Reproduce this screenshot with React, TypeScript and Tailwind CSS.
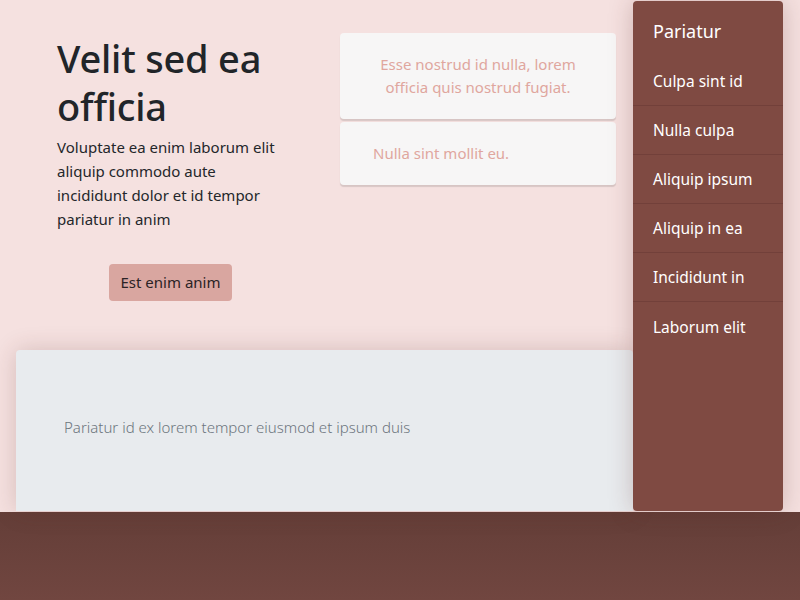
import React from "react";

const menuItems = ["Culpa sint id", "Nulla culpa", "Aliquip ipsum", "Aliquip in ea", "Incididunt in", "Laborum elit"];

const Sidebar = () => {
    return (
        <aside className="mt-px mr-[17px] w-[150px] h-[510px] shrink-0 rounded bg-[#7f4a42] text-white shadow-[0_0_24px_rgba(90,40,35,0.25)]">
            <div className="px-5 pt-[17px] pb-[13px] text-[18px] leading-[26px]">Pariatur</div>
            <ul>
                {menuItems.map((item, i) => (
                    <li key={item}
                        className={
                            "px-5 h-[49px] flex items-center pt-[2px] text-[15.5px] " +
                            (i < menuItems.length - 1 ? "border-b border-[#72403a]" : "")
                        }
                    >
                        {item}
                    </li>
                ))}
            </ul>
        </aside>
    );
};

export default function App() {
    return (
        <div className="w-[800px] h-[600px] overflow-hidden bg-[#f5e1e0] font-['Noto_Sans',sans-serif] text-[#212529]">
            <div className="flex h-[512px]">
                <div className="flex-1 flex flex-col">
                    <div className="flex h-[350px]">
                        <div className="ml-[57px] w-[227px] pt-[34px]">
                            <h1 className="text-[38px] leading-[48px] font-medium tracking-[-0.2px]">Velit sed ea officia</h1>
                            <p className="mt-[5px] text-[15px] leading-[24px] text-[#24272b]">
                                Voluptate ea enim laborum elit aliquip commodo aute incididunt dolor et id tempor pariatur in anim
                            </p>
                            <div className="mt-[33px] flex justify-center">
                                <button className="h-[37px] px-3 rounded bg-[#d9a6a0] text-[15px] text-[#2b2325]">
                                    Est enim anim
                                </button>
                            </div>
                        </div>
                        <div className="ml-[56px] mt-[33px] w-[276px] flex flex-col gap-[3px]">
                            <div className="h-[86px] rounded bg-[#f7f6f6] shadow-[0_2px_1px_rgba(0,0,0,0.12)] flex items-center justify-center text-center px-8 text-[15px] leading-[23px] text-[#e0a69e]">
                                Esse nostrud id nulla, lorem officia quis nostrud fugiat.
                            </div>
                            <div className="h-[63px] rounded bg-[#f7f6f6] shadow-[0_2px_1px_rgba(0,0,0,0.12)] flex items-center px-[33px] text-[15px] text-[#e0a69e]">
                                Nulla sint mollit eu.
                            </div>
                        </div>
                    </div>
                    <div className="ml-4 h-[161px] rounded-t bg-[#e8ebee] shadow-[0_0_24px_rgba(90,40,35,0.2)] flex items-center px-12 pb-[6px] text-[15px] font-light text-[#6c757d]">
                        Pariatur id ex lorem tempor eiusmod et ipsum duis
                    </div>
                </div>
                <Sidebar />
            </div>
            <footer className="h-[88px] bg-gradient-to-b from-[#643e38] to-[#714640]"></footer>
        </div>
    );
}
